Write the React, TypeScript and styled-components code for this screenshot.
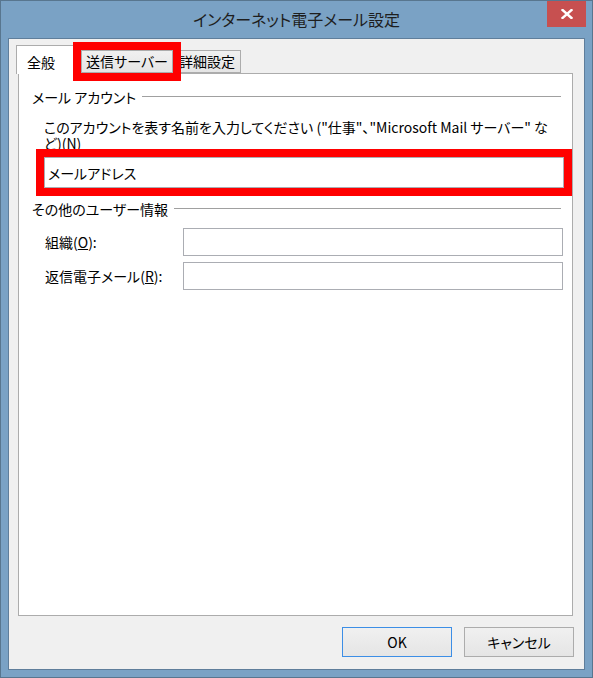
import React from 'react';
import styled, { createGlobalStyle } from 'styled-components';

const GlobalStyle = createGlobalStyle`
    html, body {
        margin: 0;
        padding: 0;
        background: #7aa2c5;
    }
    body {
        font-family: "Noto Sans CJK JP", "Noto Sans", sans-serif;
        font-feature-settings: "palt";
        color: #000;
    }
`;

const StyledWindow = styled.div`
    width: 593px;
    height: 678px;
    box-sizing: border-box;
    border: 1px solid #58768f;
    background: #7aa2c5;
    display: flex;
    flex-direction: column;
`;

const StyledTitleBar = styled.div`
    height: 37px;
    flex-shrink: 0;
    display: grid;
    grid-template-columns: 1fr auto 1fr;
    align-items: center;
`;

const StyledTitle = styled.span`
    font-size: 16px;
    color: #1e1e1e;
    padding-bottom: 2px;
`;

const StyledClose = styled.div`
    justify-self: end;
    align-self: start;
    width: 39px;
    height: 26px;
    margin-right: 6px;
    background: #c75050;
    display: flex;
    align-items: center;
    justify-content: center;
`;

const StyledClient = styled.div`
    flex: 1;
    margin: 0 7px 7px;
    border: 1px solid #5f7e9b;
    background: #f0f0f0;
    display: flex;
    flex-direction: column;
    padding-bottom: 12px;
`;

const StyledTabStrip = styled.div`
    height: 34px;
    flex-shrink: 0;
    display: flex;
    align-items: flex-end;
    padding-left: 7px;
`;

const StyledTab = styled.div<{ $active?: boolean; $marked?: boolean; $width: number; $offset?: number }>`
    box-sizing: border-box;
    width: ${p => p.$width}px;
    height: ${p => (p.$active ? 29 : 23)}px;
    margin-bottom: ${p => (p.$active ? -1 : 0)}px;
    margin-left: ${p => p.$offset ?? 0}px;
    border: 1px solid #acacac;
    border-bottom: ${p => (p.$active ? 'none' : '1px solid #acacac')};
    background: ${p => (p.$active ? '#fff' : 'linear-gradient(#f0f0f0, #e5e5e5)')};
    font-size: 14px;
    line-height: 20px;
    display: flex;
    justify-content: ${p => (p.$active ? 'flex-start' : 'center')};
    padding: ${p => (p.$active ? '6px 0 0 10px' : '0')};
    position: relative;
    z-index: ${p => (p.$marked ? 2 : p.$active ? 1 : 0)};
    outline: ${p => (p.$marked ? '8px solid #ff0000' : 'none')};
`;

const StyledPanel = styled.div`
    flex: 1;
    margin: 0 11px 0 9px;
    background: #fff;
    border: 1px solid #acacac;
    padding: 14px 11px 0 13px;
    display: flex;
    flex-direction: column;
`;

const StyledGroupHeader = styled.div<{ $gap: number }>`
    display: flex;
    align-items: center;
    gap: 6px;
    font-size: 14px;
    line-height: 18px;
    margin-top: ${p => p.$gap}px;
    &::after {
        content: '';
        flex: 1;
        height: 1px;
        margin-top: -2px;
        background: #a0a0a0;
    }
`;

const StyledDescription = styled.div`
    margin: 13px 0 0 12px;
    font-size: 14px;
    line-height: 16px;
    white-space: nowrap;
`;

const StyledInput = styled.input<{ $marked?: boolean }>`
    box-sizing: border-box;
    border: 1px solid #abadb3;
    background: #fff;
    font-family: inherit;
    font-feature-settings: "palt";
    font-size: 14px;
    color: #000;
    padding: 0 3px;
    margin: 0;
    outline: ${p => (p.$marked ? '8px solid #ff0000' : 'none')};
`;

const StyledNameInput = styled(StyledInput)`
    width: 520px;
    height: 31px;
    margin: 6px 0 0 12px;
`;

const StyledFieldList = styled.div`
    display: grid;
    grid-template-columns: 138px 380px;
    grid-auto-rows: 28px;
    row-gap: 6px;
    align-items: center;
    margin: 10px 0 0 13px;
`;

const StyledFieldLabel = styled.label`
    font-size: 14px;
    line-height: 18px;
`;

const StyledFieldInput = styled(StyledInput)`
    width: 380px;
    height: 28px;
`;

const StyledButtonRow = styled.div`
    display: flex;
    justify-content: flex-end;
    gap: 12px;
    margin: 11px 10px 0 0;
`;

const StyledButton = styled.div<{ $default?: boolean }>`
    box-sizing: border-box;
    width: 110px;
    height: 30px;
    border: 1px solid ${p => (p.$default ? '#3c8ee6' : '#acacac')};
    background: linear-gradient(#f0f0f0, #e5e5e5);
    font-size: 14px;
    display: flex;
    align-items: center;
    justify-content: center;
`;

const App = (): JSX.Element => (
    <>
        <GlobalStyle />
        <StyledWindow>
            <StyledTitleBar>
                <span />
                <StyledTitle>インターネット電子メール設定</StyledTitle>
                <StyledClose>
                    <svg width="12" height="10" viewBox="0 0 12 10">
                        <path d="M1.5 1 L10.5 9 M10.5 1 L1.5 9" stroke="#fff" strokeWidth="2.4" strokeLinecap="square" />
                    </svg>
                </StyledClose>
            </StyledTitleBar>
            <StyledClient>
                <StyledTabStrip>
                    <StyledTab $active $width={59}>全般</StyledTab>
                    <StyledTab $marked $width={92} $offset={6}>送信サーバー</StyledTab>
                    <StyledTab $width={68} $offset={0}>詳細設定</StyledTab>
                </StyledTabStrip>
                <StyledPanel>
                    <StyledGroupHeader $gap={0}>メール アカウント</StyledGroupHeader>
                    <StyledDescription>
                        このアカウントを表す名前を入力してください ("仕事"、"Microsoft Mail サーバー" な
                        <br />
                        ど)(<u>N</u>)
                    </StyledDescription>
                    <StyledNameInput $marked readOnly defaultValue="メールアドレス" />
                    <StyledGroupHeader $gap={12}>その他のユーザー情報</StyledGroupHeader>
                    <StyledFieldList>
                        <StyledFieldLabel>組織(<u>O</u>):</StyledFieldLabel>
                        <StyledFieldInput readOnly defaultValue="" />
                        <StyledFieldLabel>返信電子メール(<u>R</u>):</StyledFieldLabel>
                        <StyledFieldInput readOnly defaultValue="" />
                    </StyledFieldList>
                </StyledPanel>
                <StyledButtonRow>
                    <StyledButton $default>OK</StyledButton>
                    <StyledButton>キャンセル</StyledButton>
                </StyledButtonRow>
            </StyledClient>
        </StyledWindow>
    </>
);

export default App;
